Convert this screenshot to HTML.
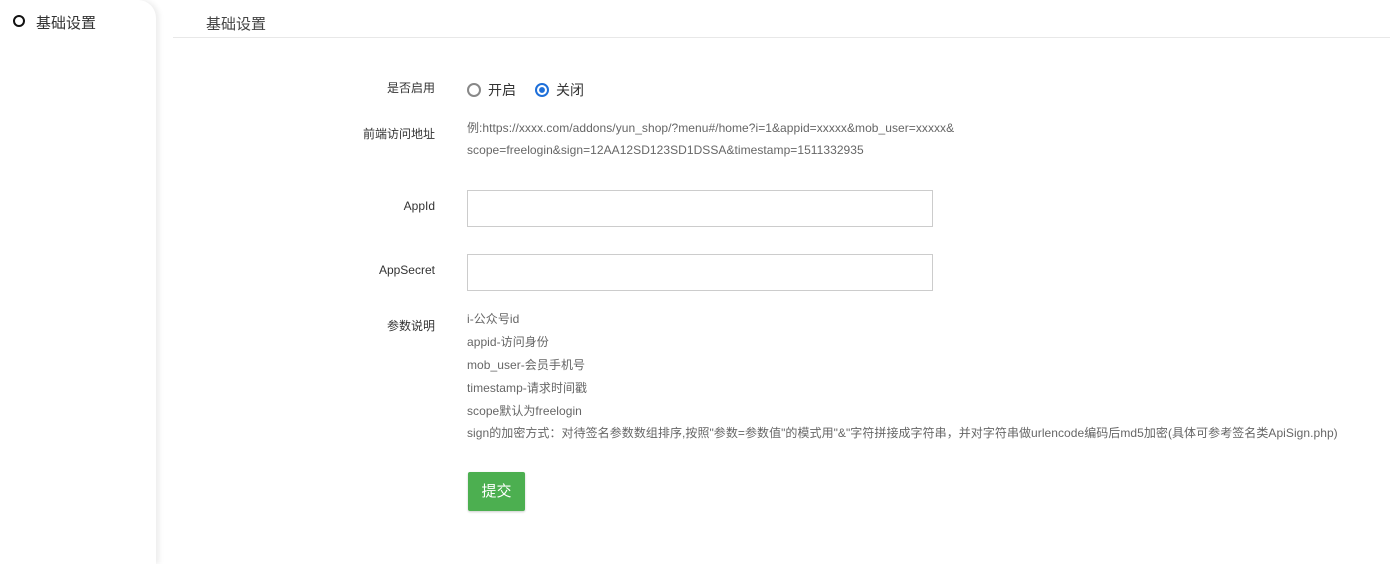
<!DOCTYPE html>
<html><head><meta charset="utf-8"><style>
body{margin:0;width:1390px;height:564px;background:#fff;font-family:"Liberation Sans","Noto Sans CJK SC",sans-serif;position:relative;overflow:hidden}
.side{position:absolute;left:0;top:0;width:156px;height:564px;background:#fff;border-top-right-radius:18px;box-shadow:3px 0 6px rgba(0,0,0,0.08)}
.a{position:absolute;white-space:nowrap}
.lab{position:absolute;right:955px;font-size:12px;color:#333;white-space:nowrap}
.txt{position:absolute;left:467px;font-size:12px;color:#666;white-space:nowrap;letter-spacing:0.05px}
.inp{position:absolute;left:467px;width:464px;height:35px;border:1px solid #ccc;background:#fff}
.rad{position:absolute;width:10px;height:10px;border-radius:50%}
</style></head><body>
<div class="side"></div>
<div class="a" style="left:13px;top:15px;width:8px;height:8px;border:2.5px solid #111;border-radius:50%"></div>
<div class="a" style="left:36px;top:12px;font-size:15px;color:#333">基础设置</div>
<div class="a" style="left:206px;top:13px;font-size:15px;color:#444">基础设置</div>
<div class="a" style="left:173px;top:37px;width:1217px;height:1px;background:#e8e8e8"></div>

<div class="lab" style="top:79px">是否启用</div>
<div class="rad" style="left:467px;top:83px;border:2px solid #888"></div>
<div class="a" style="left:488px;top:80px;font-size:14px;color:#333">开启</div>
<div class="rad" style="left:535px;top:83px;border:2px solid #1e6fd9;background:radial-gradient(circle,#1e6fd9 0 2.6px,#fff 3.2px)"></div>
<div class="a" style="left:556px;top:80px;font-size:14px;color:#333">关闭</div>

<div class="lab" style="top:125px">前端访问地址</div>
<div class="txt" style="top:119px">例:https://xxxx.com/addons/yun_shop/?menu#/home?i=1&amp;appid=xxxxx&amp;mob_user=xxxxx&amp;</div>
<div class="txt" style="top:143px">scope=freelogin&amp;sign=12AA12SD123SD1DSSA&amp;timestamp=1511332935</div>

<div class="lab" style="top:199px">AppId</div>
<div class="inp" style="top:190px"></div>
<div class="lab" style="top:263px">AppSecret</div>
<div class="inp" style="top:254px"></div>

<div class="lab" style="top:317px">参数说明</div>
<div class="txt" style="top:310px">i-公众号id</div>
<div class="txt" style="top:333px">appid-访问身份</div>
<div class="txt" style="top:356px">mob_user-会员手机号</div>
<div class="txt" style="top:379px">timestamp-请求时间戳</div>
<div class="txt" style="top:402px">scope默认为freelogin</div>
<div class="txt" style="top:424px">sign的加密方式：对待签名参数数组排序,按照"参数=参数值"的模式用"&amp;"字符拼接成字符串，并对字符串做urlencode编码后md5加密(具体可参考签名类ApiSign.php)</div>

<div class="a" style="left:468px;top:472px;width:57px;height:39px;background:#4caf50;border-radius:2px;box-shadow:0 1px 2px rgba(0,0,0,0.2);color:#fff;font-size:15px;line-height:39px;text-align:center">提交</div>
</body></html>
